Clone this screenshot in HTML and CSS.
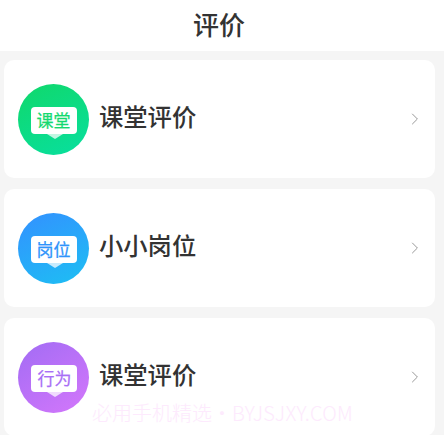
FILE: index.html
```html
<!DOCTYPE html>
<html lang="zh-CN">
<head>
<meta charset="utf-8">
<title>评价</title>
<link rel="stylesheet" href="styles.css">
</head>
<body>
<header class="header"><h1 class="title">评价</h1></header>
<main class="list">
  <section class="card">
    <div class="badge green"><span class="bubble"><span class="bubble-text">课堂</span></span></div>
    <h2 class="label">课堂评价</h2>
    <svg class="chevron" viewBox="0 0 8 14"><path d="M1.2 1.8 6.4 7 1.2 12.2"/></svg>
  </section>
  <section class="card">
    <div class="badge blue"><span class="bubble"><span class="bubble-text">岗位</span></span></div>
    <h2 class="label">小小岗位</h2>
    <svg class="chevron" viewBox="0 0 8 14"><path d="M1.2 1.8 6.4 7 1.2 12.2"/></svg>
  </section>
  <section class="card">
    <div class="badge purple"><span class="bubble"><span class="bubble-text">行为</span></span></div>
    <h2 class="label">课堂评价</h2>
    <svg class="chevron" viewBox="0 0 8 14"><path d="M1.2 1.8 6.4 7 1.2 12.2"/></svg>
  </section>
</main>
<div class="watermark">必用手机精选・<span class="domain">BYJSJXY.COM</span></div>
</body>
</html>
```
FILE: styles.css
```css
* { box-sizing: border-box; }
body {
  margin: 0;
  height: 435px;
  overflow: hidden;
  position: relative;
  background: #f5f5f5;
  color: #333;
  font-family: "Noto Sans CJK SC", sans-serif;
}
.header {
  height: 51px;
  padding: 0 6px 4px 0;
  background: #fff;
  display: flex;
  align-items: center;
  justify-content: center;
}
.title {
  margin: 0;
  font-size: 26px;
  line-height: 38px;
  font-weight: 500;
}
.list {
  display: flex;
  flex-direction: column;
  gap: 11px;
  padding: 9px 9px 0 4px;
}
.card {
  height: 118px;
  flex: none;
  padding: 0 16px 0 14px;
  border-radius: 10px;
  background: #fff;
  display: flex;
  align-items: center;
}
.badge {
  width: 71px;
  height: 71px;
  margin-top: 1px;
  border-radius: 50%;
  padding: 23px 0 0 13px;
}
.green { background: linear-gradient(155deg, #10d86b, #08df9f); color: #14d96f; }
.blue { background: linear-gradient(155deg, #3391ff, #1dbff3); color: #2e94fb; }
.purple { background: linear-gradient(145deg, #a26cf4, #d477fb); color: #a86ff6; }
.bubble {
  position: relative;
  display: flex;
  justify-content: center;
  width: 46px;
  height: 27px;
  padding-right: 1px;
  border-radius: 4px;
  background: #fff;
}
.purple .bubble { padding: 0 0 0 1px; }
.bubble::after {
  content: "";
  position: absolute;
  left: 16px;
  top: 27px;
  border: solid transparent;
  border-width: 5px 8px 0;
  border-top-color: rgba(255, 255, 255, 0.75);
}
.bubble-text {
  font-size: 17px;
  line-height: 25px;
  -webkit-text-stroke: 0.25px currentColor;
}
.label {
  margin: 0 0 6px 10px;
  font-size: 24.3px;
  line-height: 36px;
  font-weight: 500;
}
.chevron {
  width: 8px;
  height: 14px;
  margin-left: auto;
  fill: none;
  stroke: #999;
  stroke-width: 1;
}
.watermark {
  position: absolute;
  left: 92px;
  top: 398px;
  font-size: 20px;
  line-height: 30px;
  font-weight: 300;
  white-space: nowrap;
  color: #fdeafd;
}
.domain { letter-spacing: 0.2px; }
```
